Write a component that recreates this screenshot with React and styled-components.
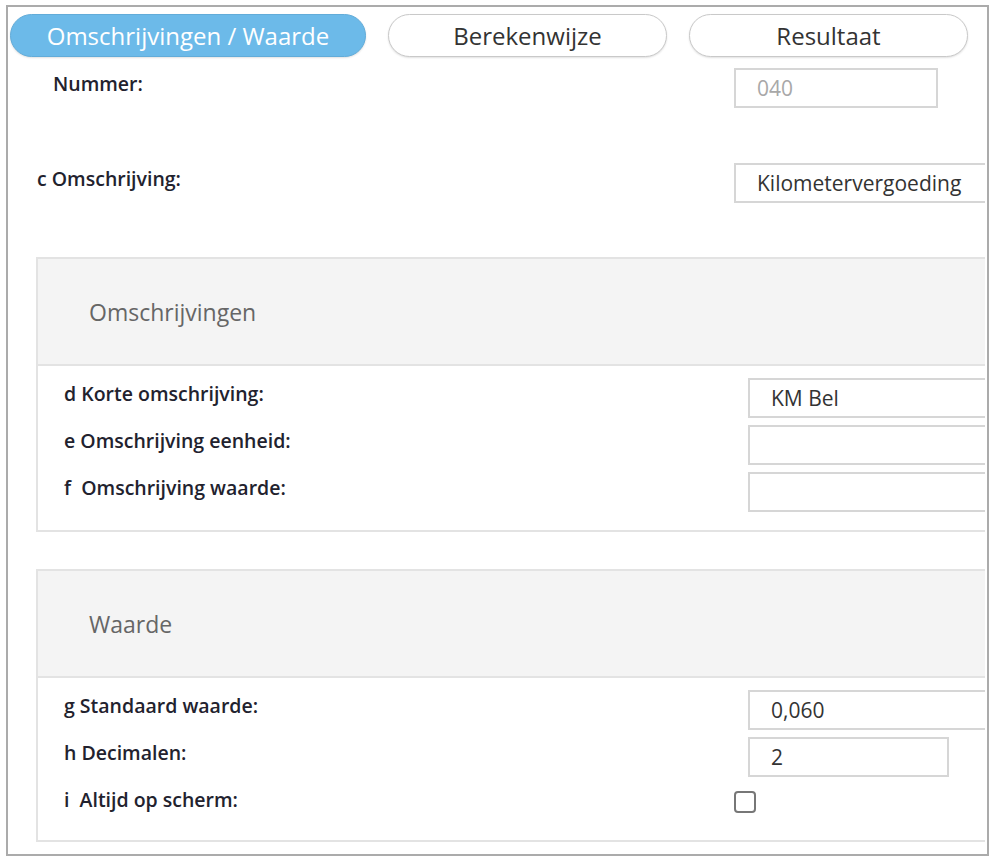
import { createGlobalStyle, styled } from "styled-components";

const GlobalStyle = createGlobalStyle`
    body {
        margin: 0;
        background: #ffffff;
        font-family: "Open Sans", "Noto Sans", Arial, sans-serif;
    }
`;

// kop met tabbladen
const tabs = [
    { label: "Omschrijvingen / Waarde", width: 356, active: true },
    { label: "Berekenwijze", width: 279 },
    { label: "Resultaat", width: 279 },
];

const Field = ({ value, width, muted }) => (
    <SInput readOnly value={value} $width={width} $muted={muted} />
);

const PanelRow = ({ label, children, box }) => (
    <SPanelRow>
        <SLabel>{label}</SLabel>
        <SCell $box={box}>{children}</SCell>
    </SPanelRow>
);

const Panel = ({ title, children, pad }) => (
    <SPanel>
        <SPanelHead>{title}</SPanelHead>
        <SPanelBody $pad={pad}>{children}</SPanelBody>
    </SPanel>
);

export default function App() {
    return (
        <>
            <GlobalStyle />
            <SFrame>
                <STabBar>
                    {tabs.map((t) => (
                        <STab key={t.label} $width={t.width} $active={t.active}>
                            {t.label}
                        </STab>
                    ))}
                </STabBar>

                <SContent>
                    <STopRow $gap={11}>
                        <SLabel $indent={17}>Nummer:</SLabel>
                        <Field value="040" width={204} muted />
                    </STopRow>

                    <STopRow $gap={55}>
                        <SLabel $indent={1}>c Omschrijving:</SLabel>
                        <Field value="Kilometervergoeding" width={300} />
                    </STopRow>

                    <Panel title="Omschrijvingen" pad={18}>
                        <PanelRow label="d Korte omschrijving:">
                            <Field value="KM Bel" width={300} />
                        </PanelRow>
                        <PanelRow label="e Omschrijving eenheid:">
                            <Field value="" width={300} />
                        </PanelRow>
                        <PanelRow label="f  Omschrijving waarde:">
                            <Field value="" width={300} />
                        </PanelRow>
                    </Panel>

                    <Panel title="Waarde" pad={16}>
                        <PanelRow label="g Standaard waarde:">
                            <Field value="0,060" width={300} />
                        </PanelRow>
                        <PanelRow label="h Decimalen:">
                            <Field value="2" width={201} />
                        </PanelRow>
                        <PanelRow label="i  Altijd op scherm:" box>
                            <SCheck type="checkbox" />
                        </PanelRow>
                    </Panel>
                </SContent>
            </SFrame>
        </>
    );
}

const SFrame = styled.div`
    margin: 5px 0 0 6px;
    width: 983px;
    height: 851px;
    box-sizing: border-box;
    border: 2px solid #ababab;
    background: #ffffff;
    overflow: hidden;
`;

const STabBar = styled.div`
    display: flex;
    gap: 22px;
    padding: 7px 0 0 2px;
`;

const STab = styled.div`
    width: ${(p) => p.$width}px;
    height: 43px;
    box-sizing: border-box;
    border-radius: 22px;
    display: flex;
    align-items: center;
    justify-content: center;
    font-size: 24px;
    color: ${(p) => (p.$active ? "#ffffff" : "#333333")};
    background: ${(p) => (p.$active ? "#6cbae9" : "#ffffff")};
    border: 1.5px solid ${(p) => (p.$active ? "#62acd9" : "#c9c9c9")};
    box-shadow: 0 1px 2px rgba(0, 0, 0, 0.12);
`;

const SContent = styled.div`
    padding-left: 28px;
    margin-right: 2px;
    overflow: hidden;
`;

const STopRow = styled.div`
    display: grid;
    grid-template-columns: 698px 1fr;
    margin-top: ${(p) => p.$gap}px;
    height: 40px;
`;

const SLabel = styled.div`
    padding: 4px 0 0 ${(p) => p.$indent || 0}px;
    font-size: 19.5px;
    line-height: 24px;
    font-weight: 600;
    color: #22222e;
    white-space: pre;
`;

const SInput = styled.input`
    width: ${(p) => p.$width}px;
    height: 40px;
    box-sizing: border-box;
    border: 2px solid #d6d6d6;
    padding: 0 0 0 21px;
    font-family: inherit;
    font-size: 21px;
    color: ${(p) => (p.$muted ? "#a8a8a8" : "#333333")};
    background: #ffffff;
    outline: none;
`;

const SPanel = styled.div`
    width: 1000px;
    margin-top: 54px;
    border: 2px solid #e3e3e3;
    box-sizing: border-box;

    & + & {
        margin-top: 37px;
    }
`;

const SPanelHead = styled.div`
    height: 105px;
    display: flex;
    align-items: center;
    padding-left: 51px;
    background: #f4f4f4;
    border-bottom: 2px solid #e3e3e3;
    font-size: 23px;
    color: #666666;
`;

const SPanelBody = styled.div`
    display: flex;
    flex-direction: column;
    gap: 7px;
    padding: 12px 0 ${(p) => p.$pad}px;
`;

const SPanelRow = styled.div`
    display: grid;
    grid-template-columns: 710px 1fr;
    height: 40px;

    & > ${SLabel} {
        padding-left: 26px;
    }
`;

const SCell = styled.div`
    display: flex;
    align-items: flex-start;
    margin-left: ${(p) => (p.$box ? -14 : 0)}px;
    padding-top: ${(p) => (p.$box ? 7 : 0)}px;
`;

const SCheck = styled.input`
    appearance: none;
    width: 22px;
    height: 22px;
    margin: 0;
    box-sizing: border-box;
    border: 2px solid #777777;
    border-radius: 4px;
    background: #ffffff;
`;
